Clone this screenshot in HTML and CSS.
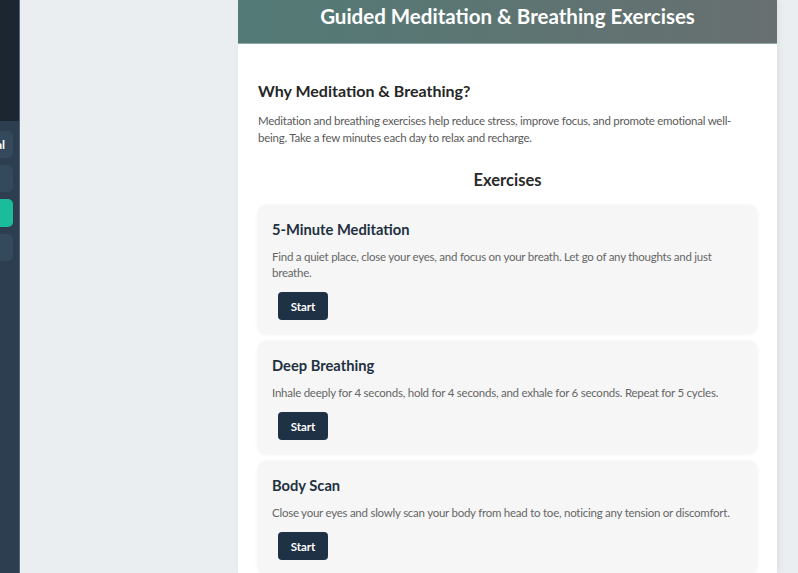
FILE: index.html
```html
<!DOCTYPE html>
<html lang="en">
<head>
<meta charset="utf-8">
<title>Guided Meditation</title>
<link rel="stylesheet" href="styles.css">
</head>
<body>
<div class="app">
  <aside class="sidebar">
    <div class="sidebar-top"></div>
    <nav class="nav">
      <a class="nav-item">Journal</a>
      <a class="nav-item"></a>
      <a class="nav-item active"></a>
      <a class="nav-item"></a>
    </nav>
  </aside>
  <main class="main">
    <section class="panel">
      <header class="panel-header">
        <h1 class="panel-title">Guided Meditation &amp; Breathing Exercises</h1>
      </header>
      <div class="panel-body">
        <h2 class="why-title">Why Meditation &amp; Breathing?</h2>
        <p class="why-text">Meditation and breathing exercises help reduce stress, improve focus, and promote emotional well-being. Take a few minutes each day to relax and recharge.</p>
        <h2 class="ex-title">Exercises</h2>
        <div class="ex-list">
          <div class="ex-card">
            <h3 class="ex-name">5-Minute Meditation</h3>
            <p class="ex-desc">Find a quiet place, close your eyes, and focus on your breath. Let go of any thoughts and just breathe.</p>
            <button class="btn">Start</button>
          </div>
          <div class="ex-card">
            <h3 class="ex-name">Deep Breathing</h3>
            <p class="ex-desc">Inhale deeply for 4 seconds, hold for 4 seconds, and exhale for 6 seconds. Repeat for 5 cycles.</p>
            <button class="btn">Start</button>
          </div>
          <div class="ex-card">
            <h3 class="ex-name">Body Scan</h3>
            <p class="ex-desc">Close your eyes and slowly scan your body from head to toe, noticing any tension or discomfort.</p>
            <button class="btn">Start</button>
          </div>
        </div>
      </div>
    </section>
  </main>
</div>
</body>
</html>
```
FILE: styles.css
```css
* { box-sizing: border-box; }
html, body { margin: 0; padding: 0; height: 100%; overflow: hidden; }
body {
  font-family: Lato, "Open Sans", sans-serif;
  background: #eaeef0;
  color: #333;
}
.app { display: flex; height: 573px; }
.sidebar {
  width: 20px;
  flex: none;
  background: #2c3e50;
  border-right: 1px solid #56677a;
  overflow: hidden;
  display: flex;
  flex-direction: column;
}
.sidebar-top { height: 121px; background: #1c2631; flex: none; }
.nav {
  margin-left: -187px;
  width: 200px;
  padding-top: 10px;
  display: flex;
  flex-direction: column;
  gap: 7px;
}
.nav-item {
  display: block;
  height: 27px;
  line-height: 27px;
  border-radius: 5px;
  background: #35495d;
  color: #fff;
  font-weight: 700;
  font-size: 12px;
  text-align: right;
  padding-right: 8px;
  white-space: nowrap;
  overflow: hidden;
}
.nav-item.active { background: #1abc9c; height: 28px; }
.main {
  flex: 1;
  padding-left: 218px;
  overflow: hidden;
}
.panel {
  width: 539px;
  background: #fff;
  height: 100%;
  box-shadow: 2px 0 6px rgba(0,0,0,0.06);
}
.panel-header {
  height: 44px;
  background: linear-gradient(90deg, #527a76 0%, #5e7472 55%, #686f70 100%);
  border-bottom: 1px solid #8fa7a4;
  display: flex;
  justify-content: center;
}
.panel-title {
  margin: 0;
  margin-top: 3px;
  color: #fff;
  font-size: 20.5px;
  line-height: 26px;
  font-weight: 700;
}
.panel-body { padding: 36px 20px 0; }
.why-title {
  margin: 0;
  font-size: 16px;
  line-height: 22px;
  font-weight: 700;
  color: #262626;
}
.why-text {
  margin: 10px 0 0;
  font-size: 11.5px;
  letter-spacing: -0.25px;
  line-height: 17px;
  color: #5a5a5a;
}
.ex-title {
  margin: 22px 0 0;
  text-align: center;
  font-size: 16.5px;
  line-height: 24px;
  font-weight: 700;
  color: #2a2a2a;
}
.ex-list {
  margin-top: 13px;
  display: flex;
  flex-direction: column;
  gap: 8px;
}
.ex-card {
  background: #f6f6f6;
  border-radius: 8px;
  padding: 14px 14px 13px;
  box-shadow: 0 1px 4px rgba(0,0,0,0.07);
}
.ex-name {
  margin: 0;
  font-size: 14.7px;
  line-height: 20px;
  font-weight: 700;
  color: #22303f;
}
.ex-desc {
  margin: 10px 0 0;
  font-size: 11.5px;
  letter-spacing: -0.25px;
  line-height: 16px;
  color: #666;
}
.btn {
  display: block;
  margin: 11px 0 0 6px;
  height: 28px;
  width: 50px;
  padding: 0;
  border: 0;
  border-radius: 4px;
  background: #1f3145;
  color: #fff;
  font-family: inherit;
  font-size: 11.5px;
  font-weight: 700;
}
```
